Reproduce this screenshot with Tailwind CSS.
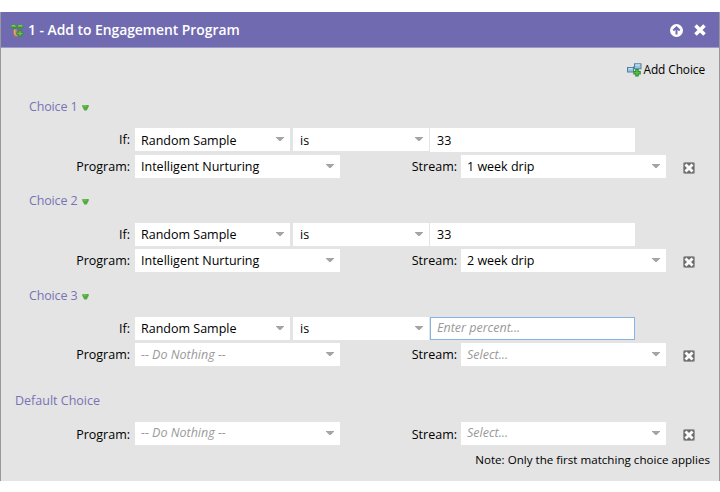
<!DOCTYPE html>
<html lang="en"><head><meta charset="utf-8"><title>Add to Engagement Program</title>
<script src="https://cdn.jsdelivr.net/npm/@tailwindcss/browser@4"></script></head>
<body class="bg-white w-[720px] h-[492px] overflow-hidden pt-3 font-['Open_Sans',sans-serif] text-[12.5px] leading-[23px] text-black">
<svg class="hidden">
  <symbol id="caret" viewBox="0 0 8 4"><path d="M0 0h8v.6L4.600 4H3.400L0 .6z" fill="#a4a4a4"/></symbol>
  <symbol id="green" viewBox="0 0 7 6"><path d="M.3 0h6.400v1.800L4.700 5.400H2.300L.3 1.800z" fill="#55aa3c"/><path d="M1 .6h3.500v1H1.500z" fill="#89c873"/></symbol>
  <symbol id="del" viewBox="0 0 12 12"><rect width="12" height="12" rx="2" fill="#999"/><rect x="1" y="1" width="10" height="10" rx="1" fill="#6c6c6c"/><path d="m3.500 3.500 5 5m0-5-5 5" stroke="#fafafa" stroke-width="2.900" stroke-linecap="square"/></symbol>
</svg>
<main class="h-[469px] bg-[#e4e4e4] border-l border-r border-l-[#98989d] border-r-[#98989d] flex flex-col">
  <header class="h-9 shrink-0 bg-[#706bb0] border-b border-[#9e9ac8] flex items-center pl-[9px] pr-[13px] text-white">
    <svg class="w-[14px] h-[14px] mt-[3px]" viewBox="0 0 14 14"><path d="M3.800 5.500 3.200 8l1 4.500h4.300L7 11V5z" fill="#bd8150"/><path d="M4.800 5.500v4.500l1.500 1.500" stroke="#e8bd8c" fill="none"/><path d="M.5 2.500C1.500.3 5.500.2 6.800 2.500 8 .2 12 .2 13.500 2.500L12.500 4.500 8 5 6.800 4 5 5 1.500 4.500z" fill="#3c9431"/><path d="M1.500 2.300q2-1.500 4 .2M8.300 2.500q2-1.600 4-.2" stroke="#8ad65a" stroke-width="1.300" fill="none"/><path d="M10 6v7M6.500 9.500h7" stroke="#2b862a" stroke-width="2.600"/><path d="M10 6.800v5.400M7.300 9.500h5.400" stroke="#65c647" stroke-width="1.300"/></svg>
    <h1 class="ml-[4px] text-[13.900px] font-semibold whitespace-nowrap tracking-[-0.03px]">1 - Add to Engagement Program</h1>
    <svg class="ml-auto w-[13px] h-[13px] mt-px" viewBox="0 0 13 13"><circle cx="6.500" cy="6.500" r="6.500" fill="#fff"/><path d="M6.500 10.500V3.500M3.300 6.500 6.500 3.300l3.200 3.200" stroke="#706bb0" stroke-width="2" fill="none"/></svg>
    <svg class="ml-[11px] w-[12px] h-[12px]" viewBox="0 0 12 12"><path d="m1.500 1.500 9 9m0-9-9 9" stroke="#fff" stroke-width="3.600"/></svg>
  </header>
  <div class="h-[46px] shrink-0 pt-[10px] pr-[14px] flex justify-end">
    <svg class="w-[15px] h-[14px] mt-[5px] mr-[2px]" viewBox="0 0 15 14"><path d="M5 6h2V3h2" stroke="#536779" fill="none"/><rect x=".5" y="4.500" width="6" height="4.500" fill="#8fc5e8" stroke="#5a7f98"/><rect x="7.500" y=".8" width="6.500" height="5" fill="#8fc5e8" stroke="#5a7f98"/><path d="M1.500 5.700h4M8.500 2h4.500" stroke="#d5edfa"/><path d="M10 6v7.500M6.300 9.700h7.500" stroke="#2f8e30" stroke-width="3.600"/><path d="M10 7v5.500M7.300 9.700h5.500" stroke="#55c043" stroke-width="1.600"/></svg>
    <span class="text-[11.900px] tracking-[-0.1px] whitespace-nowrap">Add Choice</span>
  </div>

  <section class="h-[94px] shrink-0">
    <h2 class="h-[34px] pl-7 flex items-start text-[#7873b5]"><span class="w-[53px] pt-px whitespace-nowrap tracking-[-0.15px]">Choice 1</span><svg class="w-[7px] h-[6px] mt-[11px]"><use href="#green"/></svg></h2>
    <div class="flex h-[27px]">
      <span class="w-[129px] text-right mr-[5px]">If:</span>
      <div class="w-[155px] h-[23px] bg-white pl-[6px] pr-[6px] flex justify-between mr-[3px]"><span class="pt-px">Random Sample</span><svg class="w-2 h-[4px] mt-[9px]"><use href="#caret"/></svg></div>
      <div class="w-[136px] h-[23px] bg-white pl-[7px] pr-[6px] flex justify-between mr-px"><span class="pt-px">is</span><svg class="w-2 h-[4px] mt-[9px]"><use href="#caret"/></svg></div>
      <div class="w-[205px] h-[24px] bg-white pl-[7px] pt-px">33</div>
    </div>
    <div class="flex">
      <span class="w-[129px] text-right mr-[5px]">Program:</span>
      <div class="w-[205px] h-[23px] bg-white pl-[6px] pr-[6px] flex justify-between"><span>Intelligent Nurturing</span><svg class="w-2 h-[4px] mt-[9px]"><use href="#caret"/></svg></div>
      <span class="w-[117px] text-right mr-[4px]">Stream:</span>
      <div class="w-[205px] h-[23px] bg-white pl-[6px] pr-[6px] flex justify-between"><span>1 week drip</span><svg class="w-2 h-[4px] mt-[9px]"><use href="#caret"/></svg></div>
      <svg class="w-3 h-3 ml-[17px] mt-[7px]"><use href="#del"/></svg>
    </div>
  </section>

  <section class="h-[95px] shrink-0">
    <h2 class="h-[35px] pl-7 flex items-start text-[#7873b5]"><span class="w-[53px] pt-px whitespace-nowrap tracking-[-0.15px]">Choice 2</span><svg class="w-[7px] h-[6px] mt-[11px]"><use href="#green"/></svg></h2>
    <div class="flex h-[26px]">
      <span class="w-[129px] text-right mr-[5px]">If:</span>
      <div class="w-[155px] h-[23px] bg-white pl-[6px] pr-[6px] flex justify-between mr-[3px]"><span>Random Sample</span><svg class="w-2 h-[4px] mt-[9px]"><use href="#caret"/></svg></div>
      <div class="w-[136px] h-[23px] bg-white pl-[7px] pr-[6px] flex justify-between mr-px"><span>is</span><svg class="w-2 h-[4px] mt-[9px]"><use href="#caret"/></svg></div>
      <div class="w-[205px] h-[23px] bg-white pl-[7px]">33</div>
    </div>
    <div class="flex">
      <span class="w-[129px] text-right mr-[5px]">Program:</span>
      <div class="w-[205px] h-[23px] bg-white pl-[6px] pr-[6px] flex justify-between"><span>Intelligent Nurturing</span><svg class="w-2 h-[4px] mt-[9px]"><use href="#caret"/></svg></div>
      <span class="w-[117px] text-right mr-[4px]">Stream:</span>
      <div class="w-[205px] h-[23px] bg-white pl-[6px] pr-[6px] flex justify-between"><span>2 week drip</span><svg class="w-2 h-[4px] mt-[9px]"><use href="#caret"/></svg></div>
      <svg class="w-3 h-3 ml-[17px] mt-[7px]"><use href="#del"/></svg>
    </div>
  </section>

  <section class="h-[105px] shrink-0">
    <h2 class="h-[34px] pl-7 flex items-start text-[#7873b5]"><span class="w-[53px] pt-px whitespace-nowrap tracking-[-0.15px]">Choice 3</span><svg class="w-[7px] h-[6px] mt-[11px]"><use href="#green"/></svg></h2>
    <div class="flex h-[26px]">
      <span class="w-[129px] text-right mr-[5px]">If:</span>
      <div class="w-[155px] h-[23px] bg-white pl-[6px] pr-[6px] flex justify-between mr-[3px]"><span>Random Sample</span><svg class="w-2 h-[4px] mt-[9px]"><use href="#caret"/></svg></div>
      <div class="w-[136px] h-[23px] bg-white pl-[7px] pr-[6px] flex justify-between mr-px"><span>is</span><svg class="w-2 h-[4px] mt-[9px]"><use href="#caret"/></svg></div>
      <div class="w-[205px] h-[23px] bg-white border border-[#86b4e2] pl-[6px] leading-[20px] italic text-[#999999]">Enter percent...</div>
    </div>
    <div class="flex">
      <span class="w-[129px] text-right mr-[5px]">Program:</span>
      <div class="w-[205px] h-[23px] bg-white pl-[6px] pr-[6px] flex justify-between"><span class="italic text-[#999999]">-- Do Nothing --</span><svg class="w-2 h-[4px] mt-[9px]"><use href="#caret"/></svg></div>
      <span class="w-[117px] text-right mr-[4px]">Stream:</span>
      <div class="w-[205px] h-[23px] bg-white pl-[6px] pr-[6px] flex justify-between"><span class="italic text-[#999999]">Select...</span><svg class="w-2 h-[4px] mt-[9px]"><use href="#caret"/></svg></div>
      <svg class="w-3 h-3 ml-[17px] mt-[7px]"><use href="#del"/></svg>
    </div>
  </section>

  <section>
    <h2 class="h-[34px] pt-px pl-[14px] text-[#7873b5]">Default Choice</h2>
    <div class="flex">
      <span class="w-[129px] text-right mr-[5px] pt-px">Program:</span>
      <div class="w-[205px] h-[23px] bg-white pl-[6px] pr-[6px] flex justify-between"><span class="italic text-[#999999] leading-[22px]">-- Do Nothing --</span><svg class="w-2 h-[4px] mt-[9px]"><use href="#caret"/></svg></div>
      <span class="w-[117px] text-right mr-[4px] pt-px">Stream:</span>
      <div class="w-[205px] h-[23px] bg-white pl-[6px] pr-[6px] flex justify-between"><span class="italic text-[#999999] leading-[22px]">Select...</span><svg class="w-2 h-[4px] mt-[9px]"><use href="#caret"/></svg></div>
      <svg class="w-3 h-3 ml-[17px] mt-[7px]"><use href="#del"/></svg>
    </div>
    <p class="pr-[9px] pt-[2px] text-right text-[11.600px]">Note: Only the first matching choice applies</p>
  </section>
</main>
</body></html>
